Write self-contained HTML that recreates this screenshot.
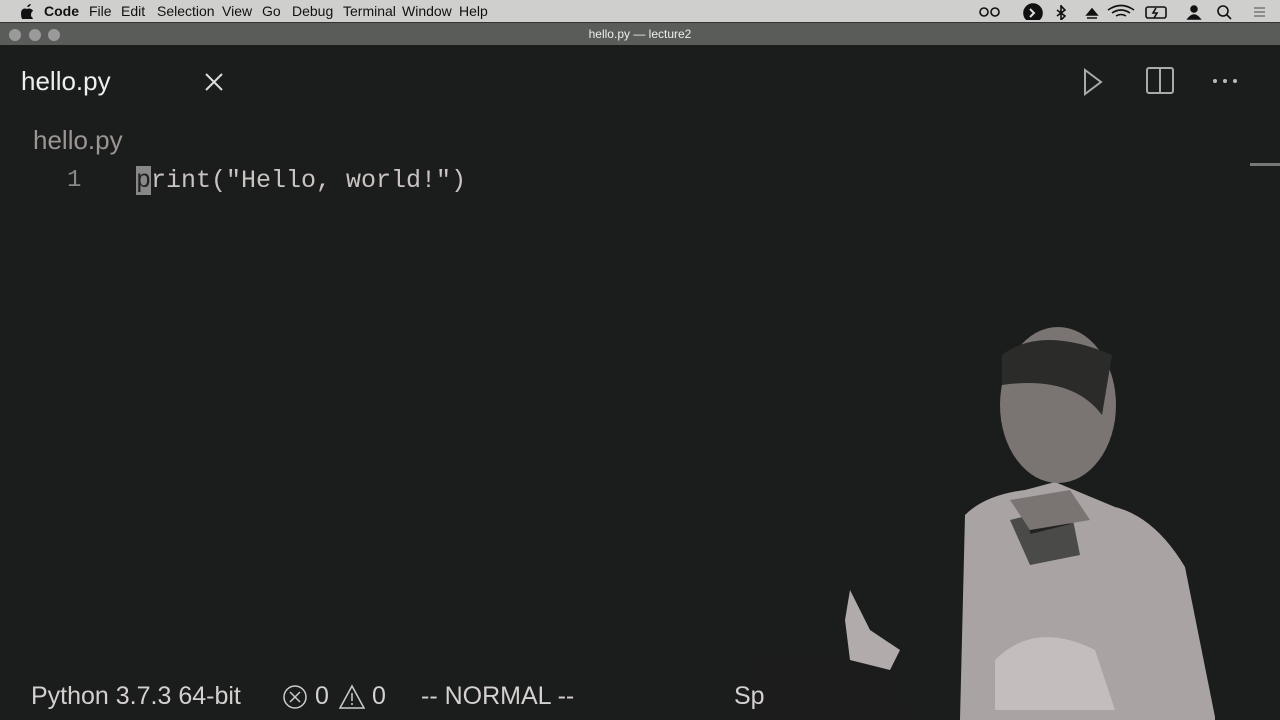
<!DOCTYPE html>
<html><head><meta charset="utf-8"><style>
body{margin:0;width:1280px;height:720px;overflow:hidden;background:#1a1d1b;font-family:"Liberation Sans",sans-serif;position:relative}
.menu{position:absolute;top:0;left:0;width:1280px;height:22px;background:#cfcfcd;color:#111;font-size:14px}
.menu span{position:absolute;top:3px}
.title{position:absolute;top:22px;left:0;width:1280px;height:22px;background:#5a5c5a;border-top:1px solid #333}
.dot{position:absolute;top:6px;width:12px;height:12px;border-radius:50%;background:#9a9a9a}
.t{position:absolute;color:#ddd;white-space:pre}
.mono{font-family:"Liberation Mono",monospace}
.sb{font-size:25px;color:#d4d0cf;top:682px}
</style></head><body>
<div class="menu">
<svg style="position:absolute;left:20px;top:3px" width="14" height="16"><path d="M7 4q1-3 4-3-1 3-4 3zM3 6q2-1 4 0 2-1 4 0 2 1 2 2-2 1-2 4 0 2 2 3-1 3-3 3-1 0-3-1-2 1-3 1-3-2-3-7 0-4 2-5z" fill="#111"/></svg>
<span style="left:44px;font-weight:bold">Code</span>
<span style="left:89px">File</span><span style="left:121px">Edit</span><span style="left:157px">Selection</span>
<span style="left:222px">View</span><span style="left:262px">Go</span><span style="left:292px">Debug</span>
<span style="left:343px">Terminal</span><span style="left:402px">Window</span><span style="left:459px">Help</span>
<svg style="position:absolute;left:975px;top:2px" width="290" height="18" fill="none" stroke="#111" stroke-width="1.6">
<circle cx="9" cy="10" r="4"/><circle cx="20" cy="10" r="4"/>
<circle cx="58" cy="11" r="9" fill="#111"/><path d="M55 7l4 4-4 4" stroke="#ddd" stroke-width="2"/>
<path d="M86 4l4 4-8 6M86 18l4-4-8-6M86 3v16"/>
<path d="M112 13l5-6 5 6zM112 16h10" fill="#111"/>
<path d="M133 8q13-9 26 0M137 11q9-6 18 0M141 14q5-3 10 0"/>
<rect x="171" y="5" width="20" height="11" rx="2"/><path d="M181 6l-3 5h4l-3 5"/>
<circle cx="219" cy="7" r="3" fill="#111"/><path d="M213 17q6-8 12 0z" fill="#111"/>
<circle cx="248" cy="9" r="5"/><path d="M252 13l4 4"/>
<path d="M279 6h12M279 10h12M279 14h12" stroke="#777"/>
</svg>
</div>
<div class="title">
<div class="dot" style="left:9px"></div><div class="dot" style="left:29px"></div><div class="dot" style="left:48px"></div>
<div style="position:absolute;left:0;width:1280px;text-align:center;top:4px;font-size:12px;color:#eee">hello.py — lecture2</div>
</div>
<div class="t" style="left:21px;top:66px;font-size:26px;color:#eee">hello.py</div>
<svg style="position:absolute;left:204px;top:72px" width="20" height="20" stroke="#ddd" stroke-width="2"><path d="M2 2l16 16M18 2L2 18"/></svg>
<svg style="position:absolute;left:1080px;top:66px" width="170" height="32" fill="none" stroke="#aaa" stroke-width="2">
<path d="M5 4l16 12-16 12z"/>
<rect x="67" y="2" width="26" height="25" rx="2"/><path d="M80 2v25"/>
<circle cx="135" cy="15" r="2" fill="#bbb" stroke="none"/><circle cx="145" cy="15" r="2" fill="#bbb" stroke="none"/><circle cx="155" cy="15" r="2" fill="#bbb" stroke="none"/>
</svg>
<div class="t" style="left:33px;top:125px;font-size:26px;color:#9b9593">hello.py</div>
<div class="t mono" style="left:67px;top:167px;font-size:24px;color:#8a8785">1</div>
<div class="t mono" style="left:136px;top:166px;font-size:25px;color:#c9c4c2"><span style="background:#888;color:#222">p</span>rint("Hello, world!")</div>
<div style="position:absolute;left:1250px;top:163px;width:30px;height:3px;background:#777"></div>
<svg style="position:absolute;left:740px;top:320px" width="540" height="400">
<path d="M5 337h150l10 63H5z" fill="#1c1c1c"/>
<path d="M225 195q20-20 60-25l30-8 60 25q40 10 70 60l30 150v3H220z" fill="#a9a4a3"/>
<path d="M270 200l60-15 10 50-50 10z" fill="#4a4a48"/>
<path d="M290 212l40-10" stroke="#222" stroke-width="4"/>
<ellipse cx="318" cy="85" rx="58" ry="78" fill="#7a7473"/>
<path d="M262 35q40-30 110 0l-10 60q-30-40-100-30z" fill="#2b2b2a"/>
<path d="M270 180l60-10 20 30-60 10z" fill="#7a7473"/>
<path d="M105 300l5-30 20 40 30 20-10 20-40-10z" fill="#b1acab"/>
<path d="M255 340q40-40 100-10l20 60h-120z" fill="#c3bebd"/>
</svg>
<div class="t sb" style="left:31px">Python 3.7.3 64-bit</div>
<svg style="position:absolute;left:282px;top:684px" width="90" height="28" fill="none" stroke="#ccc" stroke-width="1.5"><circle cx="13" cy="13" r="11"/><path d="M8 8l10 10M18 8L8 18"/><path d="M70 2l12 22H58z"/><path d="M70 9v8M70 19v2"/></svg>
<div class="t sb" style="left:315px">0</div>
<div class="t sb" style="left:372px">0</div>
<div class="t sb" style="left:421px">-- NORMAL --</div>
<div class="t sb" style="left:734px">Sp</div>
</body></html>
